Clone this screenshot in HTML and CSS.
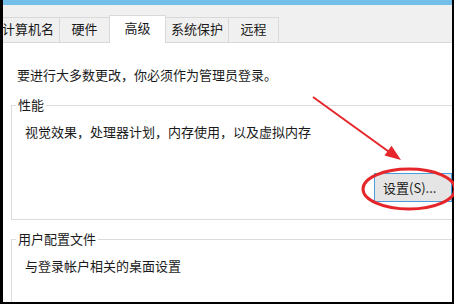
FILE: index.html
```html
<!DOCTYPE html>
<html lang="zh-CN">
<head>
<meta charset="utf-8">
<link rel="stylesheet" href="styles.css">
</head>
<body>
<div class="frame">
  <div class="titlebar"></div>
  <div class="tabstrip">
    <div class="tab">计算机名</div>
    <div class="tab">硬件</div>
    <div class="tab active">高级</div>
    <div class="tab">系统保护</div>
    <div class="tab">远程</div>
  </div>
  <div class="content">
    <p class="note">要进行大多数更改，你必须作为管理员登录。</p>
    <div class="group">
      <div class="legend">性能</div>
      <p class="desc">视觉效果，处理器计划，内存使用，以及虚拟内存</p>
      <div class="btnrow"><button class="btn">设置(S)...</button></div>
    </div>
    <div class="group group2">
      <div class="legend">用户配置文件</div>
      <p class="desc">与登录帐户相关的桌面设置</p>
    </div>
  </div>
</div>
<svg class="annot" width="454" height="304" viewBox="0 0 454 304">
  <line x1="313" y1="97" x2="392" y2="154" stroke="#e5262a" stroke-width="2"/>
  <polygon points="401,160 384.5,155.6 391.5,145.8" fill="#e5262a"/>
  <ellipse cx="409" cy="189" rx="46" ry="20" fill="none" stroke="#e5262a" stroke-width="3"/>
</svg>
</body>
</html>
```
FILE: styles.css
```css
html, body {
  margin: 0;
  padding: 0;
  background: #000;
  width: 454px;
  height: 304px;
  overflow: hidden;
}
body {
  position: relative;
  font-family: "Noto Sans CJK SC", "Microsoft YaHei", sans-serif;
  font-size: 13px;
  color: #1a1a1a;
}
.frame {
  margin-left: 3px;
  width: 449px;
  height: 302px;
  background: #fff;
  overflow: hidden;
  display: flex;
  flex-direction: column;
}
.titlebar {
  height: 5px;
  background: #73bfe9;
  flex: none;
}
.tabstrip {
  flex: none;
  height: 37px;
  background: #f0f0f0;
  border-bottom: 1px solid #d9d9d9;
  display: flex;
  align-items: flex-end;
}
.tab {
  box-sizing: border-box;
  height: 25px;
  min-width: 51px;
  padding: 0 5px;
  border: 1px solid #d9d9d9;
  border-bottom: none;
  margin-right: -1px;
  background: #f0f0f0;
  text-align: center;
  line-height: 22px;
  white-space: nowrap;
  flex: none;
}
.tab:first-child {
  margin-left: -7px;
}
.tab.active {
  height: 28px;
  min-width: 57px;
  margin-bottom: -1px;
  background: #fff;
  line-height: 24px;
  position: relative;
}
.content {
  flex: 1;
  min-width: 0;
  padding: 23px 0 0 14px;
  background: #fff;
}
.note {
  margin: 0;
  line-height: 18px;
  white-space: nowrap;
}
.group {
  box-sizing: border-box;
  width: 445px;
  margin: 21px 0 0 -6px;
  border: 1px solid #dcdcdc;
  border-right: none;
  padding: 0 4px 17px 4px;
}
.legend {
  width: fit-content;
  margin-top: -10px;
  padding: 0 2px;
  line-height: 18px;
  background: #fff;
}
.desc {
  margin: 9px 0 0 9px;
  line-height: 18px;
  white-space: nowrap;
}
.btnrow {
  display: flex;
  justify-content: flex-end;
  margin-top: 32px;
}
.btn {
  width: 78px;
  height: 29px;
  border: 1px solid #4a9ee0;
  background: #e5e5e5;
  font: inherit;
  color: #1a1a1a;
  padding: 0 0 0 8px;
  text-align: left;
}
.group2 {
  margin-top: 19px;
  padding-bottom: 60px;
}
.annot {
  position: absolute;
  left: 0;
  top: 0;
}
```
